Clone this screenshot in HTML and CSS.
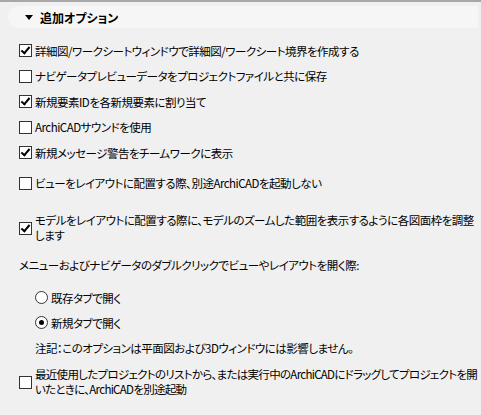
FILE: index.html
```html
<!DOCTYPE html>
<html lang="ja">
<head>
    <meta charset="UTF-8">
    <title>追加オプション</title>
    <link rel="stylesheet" href="styles.css">
</head>
<body>
    <div id="panel">
        <div class="section-header">
            <span class="arrow"></span>
            <span class="header-title">追加オプション</span>
        </div>

        <div class="options">
            <div class="check-row">
                <span class="box checked"></span>
                <span class="label">詳細図/ワークシートウィンドウで詳細図/ワークシート境界を作成する</span>
            </div>
            <div class="check-row">
                <span class="box"></span>
                <span class="label">ナビゲータプレビューデータをプロジェクトファイルと共に保存</span>
            </div>
            <div class="check-row">
                <span class="box checked"></span>
                <span class="label">新規要素IDを各新規要素に割り当て</span>
            </div>
            <div class="check-row">
                <span class="box"></span>
                <span class="label">ArchiCADサウンドを使用</span>
            </div>
            <div class="check-row">
                <span class="box checked"></span>
                <span class="label">新規メッセージ警告をチームワークに表示</span>
            </div>

            <div class="check-row group-layout">
                <span class="box"></span>
                <span class="label">ビューをレイアウトに配置する際、別途ArchiCADを起動しない</span>
            </div>
            <div class="check-row multi group-zoom">
                <span class="box checked"></span>
                <span class="label">モデルをレイアウトに配置する際に、モデルのズームした範囲を表示するように各図面枠を調整します</span>
            </div>

            <p class="menu-text">メニューおよびナビゲータのダブルクリックでビューやレイアウトを開く際:</p>

            <div class="radio-group">
                <div class="radio-row">
                    <span class="radio"></span>
                    <span class="label">既存タブで開く</span>
                </div>
                <div class="radio-row">
                    <span class="radio selected"></span>
                    <span class="label">新規タブで開く</span>
                </div>
                <p class="note">注記：このオプションは平面図および3Dウィンドウには影響しません。</p>
            </div>

            <div class="check-row multi group-recent">
                <span class="box"></span>
                <span class="label">最近使用したプロジェクトのリストから、または実行中のArchiCADにドラッグしてプロジェクトを開いたときに、ArchiCADを別途起動</span>
            </div>
        </div>
    </div>
</body>
</html>
```

FILE: styles.css
```css
body {
    margin: 0;
    background-color: #f0f0f0;
    font-family: "Noto Sans CJK JP", "Noto Sans", sans-serif;
    font-size: 11.5px;
    font-feature-settings: "palt";
    letter-spacing: -0.5px;
    color: #000;
}

#panel {
    border-top: 2px solid #a8a8a8;
    height: 413px;
}

.section-header {
    display: flex;
    align-items: center;
    height: 22px;
    margin: 4px 3px 0 8px;
    padding-left: 17px;
    background-color: #f6f6f6;
    border-radius: 11px 0 0 11px;
}

.arrow {
    width: 0;
    height: 0;
    border-left: 4px solid transparent;
    border-right: 4px solid transparent;
    border-top: 5px solid #000;
    margin-right: 7px;
}

.header-title {
    font-size: 12px;
    font-weight: bold;
    letter-spacing: 0;
}

.options {
    padding: 10px 6px 0 19px;
}

.check-row {
    display: flex;
    align-items: center;
    height: 25.5px;
}

.check-row.multi {
    height: auto;
    line-height: 15px;
}

.group-layout {
    margin-top: 5px;
}

.group-zoom {
    margin-top: 17px;
}

.group-recent {
    margin-top: 11px;
    margin-right: -6px;
    letter-spacing: -0.7px;
}

.box {
    flex: none;
    position: relative;
    width: 11px;
    height: 11px;
    border: 1px solid #333;
    background-color: #fff;
    margin-right: 3px;
}

.box.checked::after {
    content: "";
    position: absolute;
    left: 3px;
    top: 0;
    width: 3px;
    height: 7px;
    border: solid #000;
    border-width: 0 2px 2px 0;
    transform: rotate(40deg);
}

.menu-text {
    margin: 15px 0 0 0;
    line-height: 15px;
}

.radio-group {
    padding-left: 16px;
    margin-top: 12px;
}

.radio-row {
    display: flex;
    align-items: center;
    height: 25px;
}

.radio {
    flex: none;
    position: relative;
    width: 11px;
    height: 11px;
    border: 1px solid #333;
    border-radius: 50%;
    background-color: #fff;
    margin-right: 3px;
}

.radio.selected::after {
    content: "";
    position: absolute;
    left: 3px;
    top: 3px;
    width: 5px;
    height: 5px;
    border-radius: 50%;
    background-color: #000;
}

.note {
    margin: 6px 0 0 0;
    line-height: 15px;
}
```
